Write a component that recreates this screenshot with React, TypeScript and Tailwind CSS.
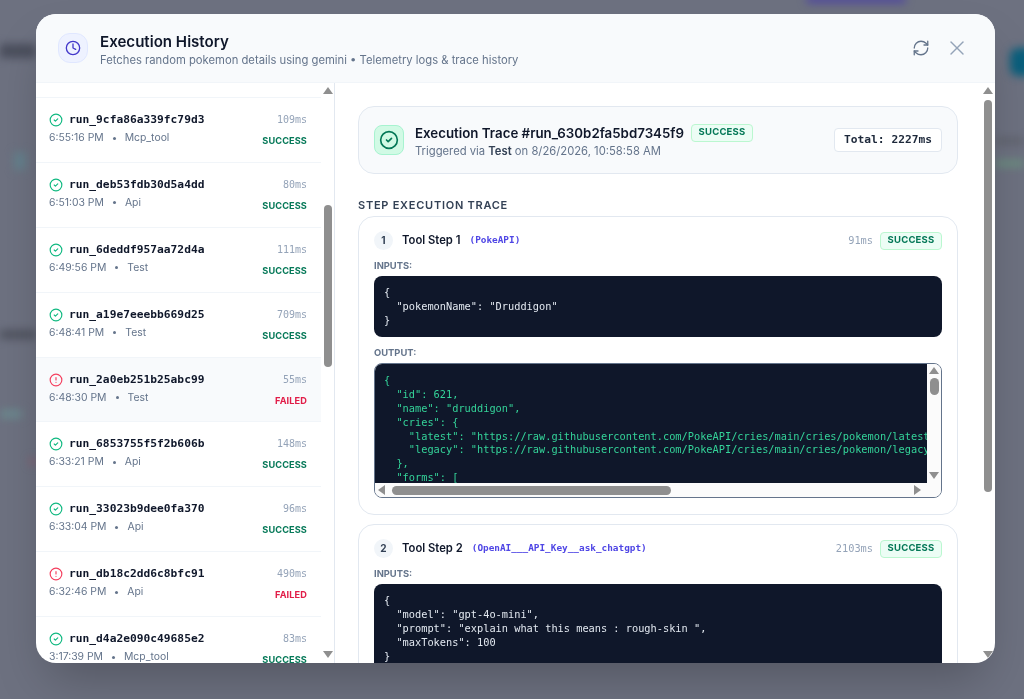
import { CircleAlert, CircleCheck, Clock, RefreshCw, X } from 'lucide-react';

const sans = "font-['Inter','Noto_Sans',sans-serif]";
const mono = "font-['DejaVu_Sans_Mono','Liberation_Mono',monospace]";

const runs = [
  { id: 'run_9cfa86a339fc79d3', time: '6:55:16 PM', source: 'Mcp_tool', ms: '109ms', ok: true },
  { id: 'run_deb53fdb30d5a4dd', time: '6:51:03 PM', source: 'Api', ms: '80ms', ok: true },
  { id: 'run_6deddf957aa72d4a', time: '6:49:56 PM', source: 'Test', ms: '111ms', ok: true },
  { id: 'run_a19e7eeebb669d25', time: '6:48:41 PM', source: 'Test', ms: '709ms', ok: true },
  { id: 'run_2a0eb251b25abc99', time: '6:48:30 PM', source: 'Test', ms: '55ms', ok: false, active: true },
  { id: 'run_6853755f5f2b606b', time: '6:33:21 PM', source: 'Api', ms: '148ms', ok: true },
  { id: 'run_33023b9dee0fa370', time: '6:33:04 PM', source: 'Api', ms: '96ms', ok: true },
  { id: 'run_db18c2dd6c8bfc91', time: '6:32:46 PM', source: 'Api', ms: '490ms', ok: false },
  { id: 'run_d4a2e090c49685e2', time: '3:17:39 PM', source: 'Mcp_tool', ms: '83ms', ok: true },
];

function Arrow({ dir }: { dir: 'up' | 'down' | 'left' | 'right' }) {
  const points = {
    up: '5,1 10,8 0,8',
    down: '0,1 10,1 5,8',
    left: '8,0 8,10 1,5',
    right: '1,0 1,10 8,5',
  }[dir];
  return (
    <svg width="10" height="10" viewBox="0 0 10 10" className="shrink-0">
      <polygon points={points} fill="#8f8f8f" />
    </svg>
  );
}

function Badge() {
  return (
    <span className={`${sans} flex h-[18px] w-[62px] items-center justify-center rounded border border-[#bbf7d0] bg-[#ecfdf5] text-[9.5px] font-bold tracking-[0.2px] text-[#047857]`}>
      SUCCESS
    </span>
  );
}

function RunRow({ run }: { run: (typeof runs)[number] }) {
  return (
    <div className={`flex h-[64.9px] shrink-0 justify-between border-b border-[#f1f5f9] pr-[14px] pl-[13px] pt-[15px] ${run.active ? 'bg-[#f8fafc]' : ''}`}>
      <div>
        <div className="flex items-center gap-[6px]">
          {run.ok ? (
            <CircleCheck size={14} strokeWidth={2} className="text-[#10b981]" />
          ) : (
            <CircleAlert size={14} strokeWidth={2} className="text-[#f43f5e]" />
          )}
          <span className={`${mono} text-[11.25px] leading-[14px] font-bold text-[#0f172a]`}>{run.id}</span>
        </div>
        <div className="mt-[4px] flex items-center text-[10.4px] leading-[14px] text-[#64748b]">
          <span>{run.time}</span>
          <span className="mx-[9px] h-[3px] w-[3px] rounded-full bg-[#64748b]" />
          <span>{run.source}</span>
        </div>
      </div>
      <div className="flex flex-col items-end">
        <span className={`${mono} text-[10px] leading-[14px] text-[#94a3b8]`}>{run.ms}</span>
        <span className="mt-[8px] text-[9.2px] leading-[12px] font-bold tracking-[0.1px] text-[#047857] data-[bad=true]:text-[#e11d48]" data-bad={!run.ok}>
          {run.ok ? 'SUCCESS' : 'FAILED'}
        </span>
      </div>
    </div>
  );
}

function StepHeader({ n, tool, ms }: { n: number; tool: string; ms: string }) {
  return (
    <div className="flex h-[19px] items-center">
      <span className="flex h-[19px] w-[19px] items-center justify-center rounded-full bg-[#f1f5f9] text-[10px] font-bold text-[#334155]">{n}</span>
      <span className="ml-[9px] text-[11.25px] font-semibold text-[#0f172a]">Tool Step {n}</span>
      <span className={`${mono} ml-[9px] text-[9.4px] font-bold text-[#4f46e5]`}>({tool})</span>
      <span className={`${mono} mr-[7px] ml-auto text-[10.3px] text-[#94a3b8]`}>{ms}</span>
      <Badge />
    </div>
  );
}

function Label({ children }: { children: string }) {
  return <div className="mt-[10px] mb-[4px] text-[9.4px] leading-[12px] font-bold text-[#64748b]">{children}</div>;
}

function Code({ children, className }: { children: string; className: string }) {
  return <pre className={`${mono} overflow-hidden pt-[10.4px] pl-[10px] text-[10.3px] leading-[13.8px] whitespace-pre ${className}`}>{children}</pre>;
}

const outputCode = `{
  "id": 621,
  "name": "druddigon",
  "cries": {
    "latest": "https://raw.githubusercontent.com/PokeAPI/cries/main/cries/pokemon/latest/621.ogg",
    "legacy": "https://raw.githubusercontent.com/PokeAPI/cries/main/cries/pokemon/legacy/621.ogg"
  },
  "forms": [
    {`;

export default function App() {
  return (
    <div className={`${sans} relative flex h-[699px] w-[1024px] items-start overflow-hidden bg-[#6d7180] pt-[14px] pl-[36px]`}>
      {/* page blurred behind the overlay */}
      <div className="absolute inset-0 blur-[4px]">
        <div className="absolute top-[-4px] left-[806px] h-[7px] w-[100px] rounded bg-[#4f46a0]" />
        <div className="absolute top-[48px] left-[1010px] h-[28px] w-[30px] rounded-lg bg-[#0a5f7c]" />
        <div className="absolute top-[44px] left-0 h-[14px] w-[36px] bg-[#4a4e5c]" />
        <div className="absolute top-[152px] left-[14px] h-[18px] w-[12px] bg-[#64808c]" />
        <div className="absolute top-[330px] left-0 h-[9px] w-[36px] bg-[#50535f]" />
        <div className="absolute top-[410px] left-0 h-[8px] w-[22px] bg-[#6c8a90]" />
        <div className="absolute top-[458px] left-[30px] h-[7px] w-[6px] bg-[#8a5f70]" />
        <div className="absolute top-[160px] left-[996px] h-[7px] w-[28px] bg-[#6c8f80]" />
        <div className="absolute top-[138px] left-[996px] h-[6px] w-[28px] bg-[#5f626c]" />
      </div>

      <div className="relative flex h-[649px] w-[959px] flex-col overflow-hidden rounded-[20px] bg-white shadow-2xl">
        <header className="flex h-[69px] shrink-0 items-center border-b border-[#f1f5f9] bg-[#f8fafc] pr-[26px] pl-[22px]">
          <div className="flex h-[30px] w-[30px] items-center justify-center rounded-xl border border-[#e0e7ff] bg-[#eef2ff] text-[#4338ca]">
            <Clock size={16} strokeWidth={2} />
          </div>
          <div className="ml-[12px] pt-[4px]">
            <h1 className="text-[15.1px] leading-[20px] font-semibold text-[#0f172a]">Execution History</h1>
            <p className="text-[11.25px] leading-[16px] text-[#64748b]">Fetches random pokemon details using gemini • Telemetry logs &amp; trace history</p>
          </div>
          <RefreshCw size={18} strokeWidth={1.75} className="ml-auto text-[#64748b]" />
          <X size={24} strokeWidth={1.4} className="ml-[15px] text-[#94a3b8]" />
        </header>

        <div className="flex min-h-0 flex-1">
          <aside className="flex w-[299px] shrink-0 border-r border-[#e2e8f0]">
            <div className="min-w-0 flex-1 overflow-hidden">
              <div className="h-[15px] border-b border-[#f1f5f9]" />
              {runs.map(run => (
                <RunRow key={run.id} run={run} />
              ))}
            </div>
            <div className="flex w-[13px] shrink-0 flex-col items-center py-[3px]">
              <Arrow dir="up" />
              <div className="mt-[109px] h-[162px] w-[8px] rounded-full bg-[#8f8f8f]" />
              <div className="flex-1" />
              <Arrow dir="down" />
            </div>
          </aside>

          <main className="flex min-w-0 flex-1">
            <div className="min-w-0 flex-1 overflow-hidden px-[23px] pt-[23px]">
              <section className="flex h-[68px] items-center rounded-2xl border border-[#e2e8f0] bg-[#f8fafc] px-[15px]">
                <div className="flex h-[30px] w-[30px] items-center justify-center rounded-lg border border-[#a7f3d0] bg-[#d1fae5] text-[#047857]">
                  <CircleCheck size={20} strokeWidth={2} />
                </div>
                <div className="ml-[11px] pt-[2px]">
                  <div className="flex items-center gap-[7px]">
                    <span className="text-[13.3px] leading-[18px] font-semibold text-[#0f172a]">Execution Trace #run_630b2fa5bd7345f9</span>
                    <Badge />
                  </div>
                  <p className="mt-[2px] text-[11.25px] leading-[15px] text-[#64748b]">
                    Triggered via <span className="font-semibold text-[#334155]">Test</span> on 8/26/2026, 10:58:58 AM
                  </p>
                </div>
                <div className={`${mono} ml-auto flex h-[24px] w-[108px] items-center justify-center rounded border border-[#e2e8f0] bg-white text-[11.25px] font-bold text-[#1e293b]`}>
                  Total: 2227ms
                </div>
              </section>

              <h2 className="mt-[24px] text-[11px] leading-[14px] font-semibold tracking-[0.75px] text-[#334155]">STEP EXECUTION TRACE</h2>

              <section className="mt-[4px] h-[299px] rounded-2xl border border-[#e2e8f0] px-[15px] pt-[14px]">
                <StepHeader n={1} tool="PokeAPI" ms="91ms" />
                <Label>INPUTS:</Label>
                <Code className="h-[61px] rounded-lg bg-[#0f172a] text-[#e2e8f0]">{`{
  "pokemonName": "Druddigon"
}`}</Code>
                <Label>OUTPUT:</Label>
                <div className="flex h-[135px] flex-col overflow-hidden rounded-lg border border-[#64748b] bg-white">
                  <div className="flex min-h-0 flex-1">
                    <Code className="-ml-px min-w-0 flex-1 bg-[#0f172a] text-[#34d399]">{outputCode}</Code>
                    <div className="flex w-[14px] shrink-0 flex-col items-center bg-[#fbfbfb] py-[2px]">
                      <Arrow dir="up" />
                      <div className="mt-[2px] h-[17px] w-[9px] rounded-full bg-[#8f8f8f]" />
                      <div className="flex-1" />
                      <Arrow dir="down" />
                    </div>
                  </div>
                  <div className="flex h-[14px] shrink-0 items-center bg-[#fbfbfb] pr-[18px] pl-[2px]">
                    <Arrow dir="left" />
                    <div className="ml-[5px] h-[9px] w-[279px] rounded-full bg-[#8f8f8f]" />
                    <div className="flex-1" />
                    <Arrow dir="right" />
                  </div>
                </div>
              </section>

              <section className="mt-[9px] h-[300px] rounded-2xl border border-[#e2e8f0] px-[15px] pt-[14px]">
                <StepHeader n={2} tool="OpenAI___API_Key__ask_chatgpt" ms="2103ms" />
                <Label>INPUTS:</Label>
                <Code className="h-[90px] rounded-lg bg-[#0f172a] text-[#e2e8f0]">{`{
  "model": "gpt-4o-mini",
  "prompt": "explain what this means : rough-skin ",
  "maxTokens": 100
}`}</Code>
              </section>
            </div>
            <div className="flex w-[14px] shrink-0 flex-col items-center py-[3px]">
              <Arrow dir="up" />
              <div className="mt-[4px] h-[392px] w-[8px] rounded-full bg-[#8f8f8f]" />
              <div className="flex-1" />
              <Arrow dir="down" />
            </div>
          </main>
        </div>
      </div>
    </div>
  );
}
